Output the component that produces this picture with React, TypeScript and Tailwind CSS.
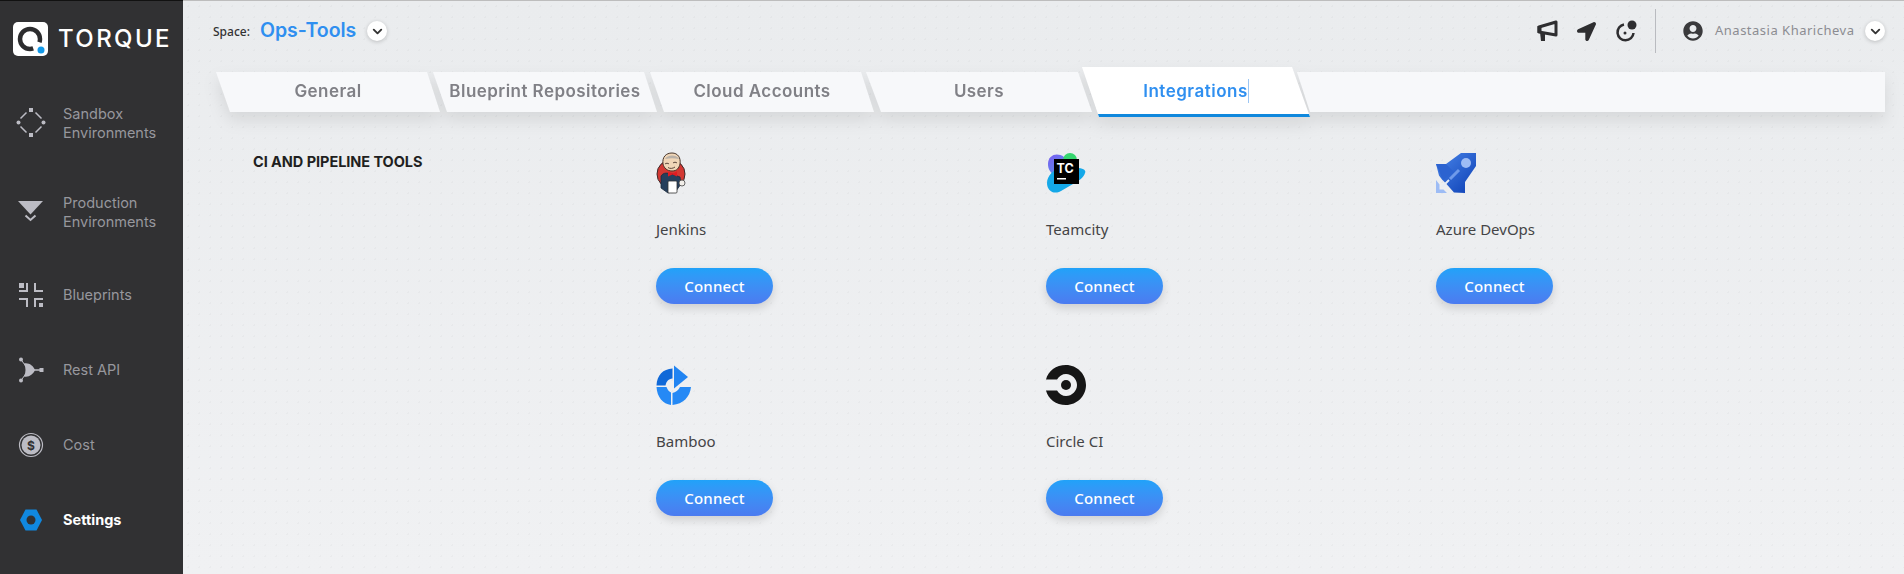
import { ReactNode } from "react"
import { ChevronDown } from "lucide-react"
import { FaLocationArrow, FaUserCircle } from "react-icons/fa"

const SandboxIcon = () => <svg width="30" height="30" viewBox="0 0 30 30" fill="#bcbcc4">
    <rect x="13" y="0" width="4" height="4" />
    <rect x="13" y="25" width="4" height="4" />
    <circle cx="2.5" cy="14.5" r="2" />
    <circle cx="27.5" cy="14.5" r="2" />
    <path d="M10.5 4.5 4.5 10.5M19.5 4.5l6 6M4.5 18.5l6 6M25.5 18.5l-6 6" stroke="#bcbcc4" strokeWidth="1.5" />
</svg>

const ProductionIcon = () => <svg width="30" height="24" viewBox="0 0 30 24" fill="#bcbcc4">
    <path d="M2 1h25L14.5 14.5z" />
    <path d="M9.5 15.5l5 4.500 5-4.500" fill="none" stroke="#bcbcc4" strokeWidth="2" />
</svg>

const BlueprintsIcon = () => <svg width="28" height="28" viewBox="0 0 28 28" fill="none" stroke="#bcbcc4" strokeWidth="2">
    <rect x="2" y="2" width="5" height="5" fill="#bcbcc4" stroke="none" />
    <path d="M2 10h8V2M18 2v8h8M2 18h8v8M26 18h-8v8" />
    <rect x="22" y="22" width="4" height="4" fill="#bcbcc4" stroke="none" />
</svg>

const RestIcon = () => <svg width="26" height="26" viewBox="0 0 26 26" fill="#bcbcc4">
    <circle cx="3" cy="2.500" r="2" />
    <circle cx="3" cy="23.500" r="2" />
    <path d="M3 2.500l5 7M3 23.500l5-7" stroke="#bcbcc4" strokeWidth="1" />
    <path d="M6 6.500c5-1 9 2 11 6.500-2 4.500-6 7.500-11 6.500 2-4 2-9 0-13z" />
    <path d="M16 13h6" stroke="#bcbcc4" strokeWidth="1.500" />
    <rect x="21.500" y="11" width="4" height="4" />
</svg>

const CostIcon = () => <svg width="26" height="26" viewBox="0 0 26 26">
    <circle cx="13" cy="13" r="11.500" fill="none" stroke="#bcbcc4" strokeWidth="1.200" />
    <circle cx="13" cy="13" r="9.500" fill="#bcbcc4" />
    <text x="13" y="17.500" textAnchor="middle" fontSize="12" fontWeight="700" fontFamily="Inter, sans-serif" fill="#313133">$</text>
</svg>

const SettingsIcon = () => <svg width="24" height="22" viewBox="0 0 24 22">
    <path d="M6.500 0.500h11L23 11l-5.500 10.500h-11L1 11z" fill="#1088e0" />
    <circle cx="12" cy="11" r="4.500" fill="#313133" />
</svg>

const LogoMark = () => <div className="w-[35px] h-[34px] bg-white rounded-[5px] flex items-center justify-center">
    <svg width="29" height="29" viewBox="0 0 29 29" fill="none">
        <circle cx="14" cy="14" r="10" stroke="#2c2c2e" strokeWidth="4.500" strokeDasharray="53.800 9" strokeDashoffset="-12.350" />
        <circle cx="25" cy="25" r="3.500" fill="#1399e8" />
    </svg>
</div>

const JenkinsIcon = () => <svg width="32" height="42" viewBox="0 0 32 42">
    <circle cx="15" cy="22" r="14" fill="#d33833" stroke="#3a2a2a" strokeWidth="1" />
    <path d="M7 12C6 5 10 1 16 1s9 5 8 11c-1 4-3 7-8 7-5 0-8-3-9-7z" fill="#f0d6b7" stroke="#49372c" strokeWidth="1" />
    <path d="M9 7c2-4 11-5 14 0-5-1-9-1-14 0z" fill="#b9b1a8" />
    <path d="M9 12c1-1 3-1 4 0M17 11c1-1 3-1 4 0M12 15.500c2 1.500 5 1 7-.500" fill="none" stroke="#49372c" strokeWidth="0.900" />
    <path d="M5 36V24c3-4 6-3 11-2l8 3 1 7-5 7-8 2z" fill="#263f5c" stroke="#1d2c3d" strokeWidth="0.800" />
    <path d="M12 19.500l4.500 2 4.500-2v5l-4.500-2-4.500 2z" fill="#e01b22" />
    <rect x="12" y="29" width="9" height="12" rx="1" fill="#fff" stroke="#333" strokeWidth="0.800" />
    <circle cx="26" cy="31" r="3" fill="#f1eee9" stroke="#444" strokeWidth="0.800" />
</svg>

const TeamcityIcon = () => <svg width="40" height="42" viewBox="0 0 40 42">
    <defs>
        <linearGradient id="tcPurple" x1="0" y1="0" x2="1" y2="1">
            <stop offset="0" stopColor="#7c5cf0" />
            <stop offset="1" stopColor="#4aa0ee" />
        </linearGradient>
    </defs>
    <path d="M2 12C2 3 11 0 18 5l8 8-18 10C4 20 2 17 2 12z" fill="url(#tcPurple)" />
    <circle cx="24" cy="8" r="7" fill="#36d66f" />
    <path d="M1 31c0-7 7-15 15-15h14c9 0 10 3 9 5-1 4-6 8-12 11L15 39C8 43 1 39 1 31z" fill="#14a8e8" />
    <rect x="8" y="7" width="25" height="25" fill="#000" />
    <text x="10.500" y="21" fontSize="12.500" fontWeight="700" fontFamily="Inter, sans-serif" fill="#fff">TC</text>
    <rect x="11" y="26" width="9" height="1.500" fill="#fff" />
</svg>

const AzureIcon = () => <svg width="40" height="42" viewBox="0 0 40 42">
    <defs>
        <linearGradient id="azureBody" x1="0" y1="0" x2="1" y2="1">
            <stop offset="0" stopColor="#4a86ea" />
            <stop offset="1" stopColor="#0c3fb4" />
        </linearGradient>
    </defs>
    <path d="M0 12h10L25 1h15v13L29 30v11l-11-.500-8-9-4-4-3-4z" fill="url(#azureBody)" />
    <path d="M0 12h10l8 8-11 8z" fill="#2c63d0" />
    <circle cx="30" cy="11" r="5" fill="#9dbcf5" />
    <path d="M14 27l9-9" stroke="#6f9aea" strokeWidth="3" />
    <path d="M0 28v13h11l-3.500-3.500H3.500v-5z" fill="#9dbcf5" />
    <path d="M6 35l7-7" stroke="#e4ebf6" strokeWidth="2" />
</svg>

const BambooIcon = () => <svg width="36" height="42" viewBox="0 0 36 42">
    <path d="M18 1.500 32 13l-14 11.500z" fill="#2184f2" />
    <path d="M16.500 4.500v10c-4 .500-6 2.500-7 7H.500C1 11 7 5 16.500 4.500z" fill="#1069d8" />
    <path d="M.500 23h10c1 3 3 5 4.500 5.500V41C7 40 1 33 .500 23z" fill="#2589f5" />
    <path d="M16.500 29c3-.500 6-3 7.500-6h11c-1 10-8 17-18.500 18z" fill="#2589f5" />
</svg>

const CircleCiIcon = () => <svg width="40" height="40" viewBox="0 0 40 40">
    <path d="M0 14.500C2 6 10 0 20 0c11 0 20 9 20 20s-9 20-20 20C10 40 2 34 0 25.500h11c2 3.500 5.500 5.500 9 5.500 6 0 11-5 11-11S26 9 20 9c-3.500 0-7 2-9 5.500z" fill="#161616" />
    <circle cx="20" cy="20" r="5" fill="#161616" />
</svg>

const MegaphoneIcon = () => <svg width="21" height="22" viewBox="0 0 21 22" fill="none">
    <path d="M2 7l17-5v13L2 12z" stroke="#2e2e30" strokeWidth="3" strokeLinejoin="round" />
    <path d="M0.500 6h4v7h-4z" fill="#2e2e30" />
    <path d="M3 12h5v9H4z" fill="#2e2e30" />
</svg>

const TimerIcon = () => <svg width="22" height="22" viewBox="0 0 22 22" fill="none">
    <path d="M9 4.500A8 8 0 1 0 18.500 13" stroke="#2e2e30" strokeWidth="2.500" />
    <circle cx="10" cy="13" r="1.500" fill="#2e2e30" />
    <circle cx="17" cy="5" r="4.500" fill="#2e2e30" />
</svg>

const RoundChevron = () => <div className="w-5 h-5 rounded-full bg-white shadow-[0_1px_4px_rgba(0,0,0,0.2)] flex items-center justify-center">
    <ChevronDown size={15} strokeWidth={3} color="#333" />
</div>

const navItems: Array<{ label: ReactNode, icon: ReactNode, height: string, active?: boolean }> = [
    { label: <>Sandbox<br />Environments</>, icon: <SandboxIcon />, height: "h-[89px]" },
    { label: <>Production<br />Environments</>, icon: <ProductionIcon />, height: "h-[90px]" },
    { label: "Blueprints", icon: <BlueprintsIcon />, height: "h-[75px]" },
    { label: "Rest API", icon: <RestIcon />, height: "h-[75px]" },
    { label: "Cost", icon: <CostIcon />, height: "h-[75px]" },
    { label: "Settings", icon: <SettingsIcon />, height: "h-[75px]", active: true },
]

const tabs = [
    { label: "General", width: "w-[224px]", shape: "[clip-path:polygon(0_0,211px_0,100%_100%,14px_100%)]" },
    { label: "Blueprint Repositories", width: "w-[224px]", shape: "[clip-path:polygon(0_0,211px_0,100%_100%,14px_100%)]" },
    { label: "Cloud Accounts", width: "w-[224px]", shape: "[clip-path:polygon(0_0,211px_0,100%_100%,14px_100%)]" },
    { label: "Users", width: "w-[226px]", shape: "[clip-path:polygon(0_0,212px_0,100%_100%,15px_100%)]" },
]

const tools = [
    { name: "Jenkins", icon: <JenkinsIcon /> },
    { name: "Teamcity", icon: <TeamcityIcon /> },
    { name: "Azure DevOps", icon: <AzureIcon /> },
    { name: "Bamboo", icon: <BambooIcon /> },
    { name: "Circle CI", icon: <CircleCiIcon /> },
]

const App = () => {
    return <div className="flex w-[1904px] h-[574px] overflow-hidden font-['Inter',sans-serif]">
        <aside className="w-[183px] shrink-0 bg-[#313133] border-t border-[#111]">
            <div className="h-[77px] pt-[21px] pl-[13px] flex items-start gap-[10px]">
                <LogoMark />
                <span className="text-white text-[24px] leading-[34px] font-medium tracking-[2.4px]">TORQUE</span>
            </div>
            {
                navItems.map(
                    (item, index) => <div key={index} className={`flex items-center ${item.height}`}>
                        <div className="w-[63px] shrink-0 flex justify-center pr-[2px]">{item.icon}</div>
                        <div className={`text-[14.5px] leading-[19px] ${item.active ? "text-white font-bold" : "text-[#97979d]"}`}>
                            {item.label}
                        </div>
                    </div>
                )
            }
        </aside>

        <main className="flex-1 border-t border-[#bdbdbd] bg-[radial-gradient(rgba(0,0,0,0.025)_1px,transparent_1px),linear-gradient(#eaecee,#f0f1f3)] [background-size:11px_11px,100%_100%]">
            <header className="h-[60px] flex items-center pl-[30px] pr-[19px]">
                <span className="font-['Noto_Sans',sans-serif] text-[12px] font-medium text-[#333] mt-[2px]">Space:</span>
                <span className="ml-[10px] text-[19.5px] font-semibold text-[#2f8ff0]">Ops-Tools</span>
                <div className="ml-[11px]"><RoundChevron /></div>
                <div className="ml-auto flex items-center">
                    <MegaphoneIcon />
                    <FaLocationArrow size={19} color="#2e2e30" className="ml-[19px]" />
                    <div className="ml-[19px]"><TimerIcon /></div>
                    <div className="ml-[18px] w-px h-[44px] bg-[#b9bbc0]" />
                    <FaUserCircle size={20} color="#3a3a3c" className="ml-[27px]" />
                    <span className="ml-[12px] w-[140px] font-['Noto_Sans',sans-serif] text-[13px] tracking-[0.5px] text-[#8c8c92]">Anastasia Kharicheva</span>
                    <div className="ml-[10px]"><RoundChevron /></div>
                </div>
            </header>

            <div className="flex items-end h-[56px] ml-[33px] drop-shadow-[0_8px_8px_rgba(0,0,0,0.09)]">
                {
                    tabs.map(
                        (tab, index) => <div key={index} className={`${tab.width} h-[40px] mb-[5px] ${index > 0 ? "-ml-[7px]" : ""} ${index == 3 ? "-ml-[8px]" : ""} bg-[#f7f8fa] flex items-center justify-center text-[17px] font-semibold text-[#808086] tracking-[0.45px] whitespace-nowrap ${tab.shape}`}>
                            {tab.label}
                        </div>
                    )
                }
                <div className="w-[228px] h-[50px] -ml-[10px] relative z-10 bg-white flex items-center justify-center pb-[3px] [clip-path:polygon(0_0,210px_0,100%_100%,17px_100%)]">
                    <span className="text-[17px] font-semibold text-[#2f8ff0] leading-[24px] tracking-[0.5px] border-r border-[#9cc6f4]">Integrations</span>
                    <div className="absolute left-0 right-0 bottom-0 h-[3px] bg-[#0f88dd]" />
                </div>
                <div className="w-[588px] h-[40px] mb-[5px] -ml-[13px] bg-[#f7f8fa] [clip-path:polygon(0_0,100%_0,100%_100%,13px_100%)]" />
            </div>

            <section className="flex mt-[35px] ml-[70px]">
                <h2 className="w-[403px] shrink-0 text-[14.5px] font-bold text-[#1f1f21] leading-[20px] tracking-[-0.05px]">CI AND PIPELINE TOOLS</h2>
                <div className="grid grid-cols-[390px_390px_390px]">
                    {
                        tools.map(
                            (tool, index) => <div key={index} className="h-[212px] font-['Noto_Sans',sans-serif]">
                                <div className="h-[42px] flex items-center">{tool.icon}</div>
                                <div className="mt-[25px] text-[15px] leading-[20px] text-[#444446]">{tool.name}</div>
                                <button className="block mt-[29px] w-[117px] h-[36px] rounded-full bg-linear-to-b from-[#20a2f9] to-[#4b7bf0] text-white text-[15px] font-medium tracking-[0.2px] shadow-[0_4px_10px_rgba(0,0,0,0.14)]">
                                    Connect
                                </button>
                            </div>
                        )
                    }
                </div>
            </section>
        </main>
    </div>
}
export default App
